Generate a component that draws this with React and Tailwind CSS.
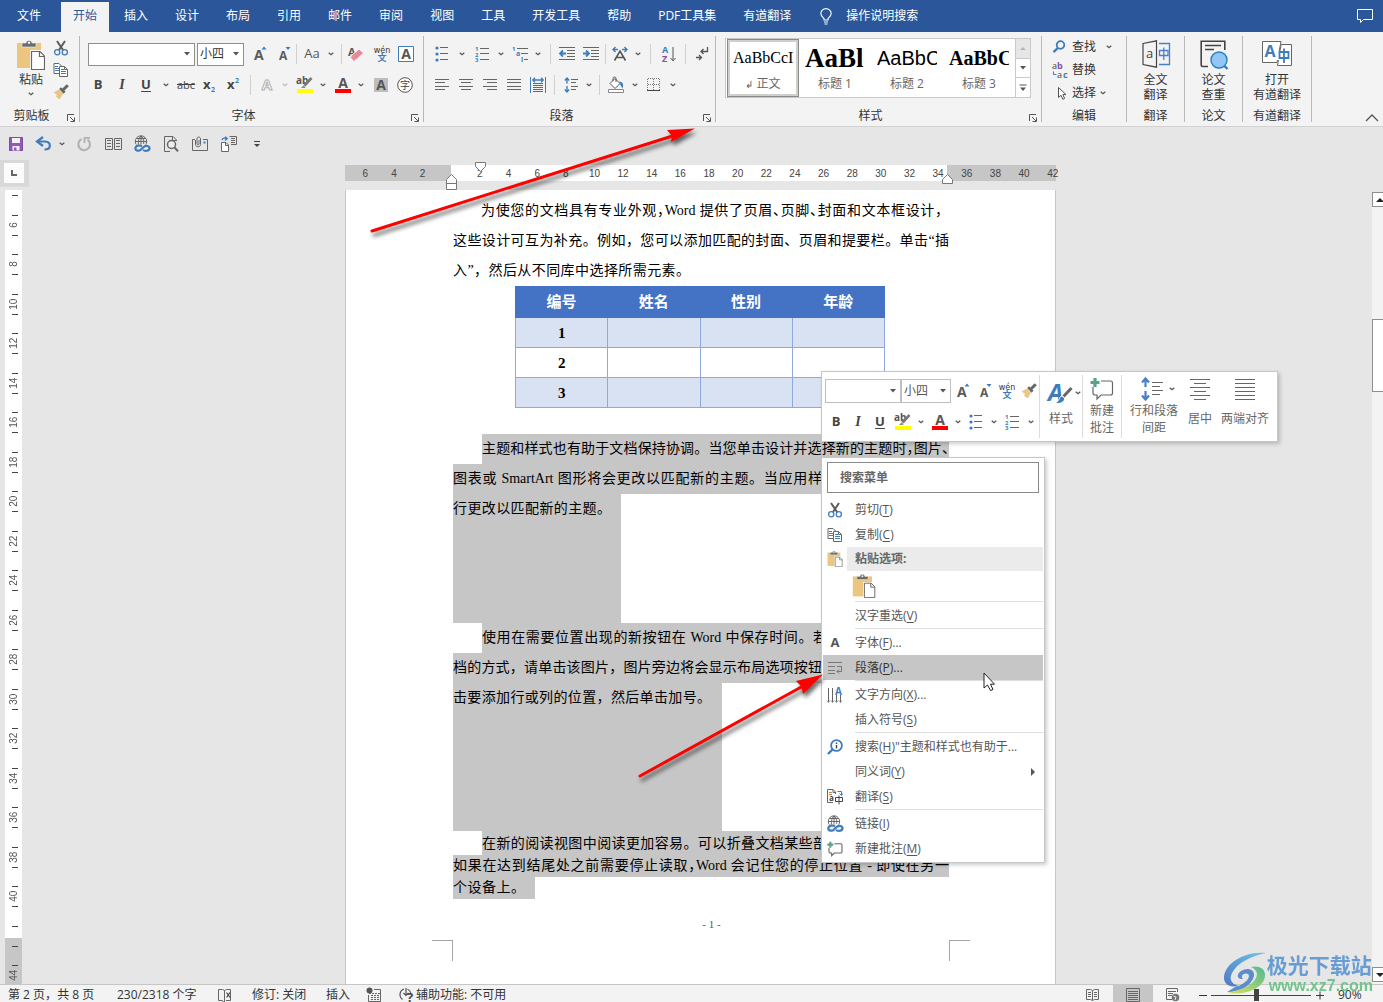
import React from "react";

const GRAY = "#666666";
const BLUE = "#3f7cbb";

/* ---------- small building blocks ---------- */

function Svg({ w = 16, h = 16, children, className = "" }) {
  return (
    <svg width={w} height={h} viewBox={`0 0 ${w} ${h}`} fill="none" aria-hidden="true" className={"shrink-0 overflow-visible " + className}>
      {children}
    </svg>
  );
}

function Btn({ label, className = "w-6", children }) {
  return (
    <button type="button" aria-label={label} title={label} className={"flex h-6 shrink-0 items-center justify-center " + className}>
      {children}
    </button>
  );
}

function Chevron({ color = "#555" }) {
  return (
    <Svg w={6} h={4}>
      <path d="M0.7 0.7 L3 2.8 L5.3 0.7" stroke={color} strokeWidth="1.2" />
    </Svg>
  );
}

function Drop({ label, className = "w-3", color }) {
  return (
    <Btn label={label} className={className}>
      <Chevron color={color} />
    </Btn>
  );
}

function Sep({ className = "" }) {
  return <span className={"h-5 w-px shrink-0 bg-[#d0d0d0] " + className} />;
}

function Combo({ label, value, className = "" }) {
  return (
    <div className={"grid shrink-0 items-center border bg-white " + className}>
      <select aria-label={label} defaultValue={value} className="col-start-1 row-start-1 h-full w-full appearance-none bg-transparent pl-0.5 text-xs leading-4 outline-none">
        <option>{value}</option>
      </select>
      <Svg w={6} h={4} className="pointer-events-none col-start-1 row-start-1 mr-1 justify-self-end">
        <path d="M0 0H6L3 3.4Z" fill="#555" />
      </Svg>
    </div>
  );
}

/* ---------- icons ---------- */

const T = ({ x, y, s, c = "#444", b, f = "Open Sans", i, children, a = "start" }) => (
  <text x={x} y={y} fontSize={s} fill={c} fontWeight={b ? 700 : 400} fontStyle={i ? "italic" : "normal"} textAnchor={a} fontFamily={`"${f}", "Noto Sans CJK SC", sans-serif`}>
    {children}
  </text>
);

const lines = (list, c = GRAY) =>
  list.map(([x1, x2, y], k) => <path key={k} d={`M${x1} ${y + 0.5}H${x2}`} stroke={c} shapeRendering="crispEdges" />);

const ScissorsIcon = () => (
  <Svg>
    <path d="M4 1L10.2 10.2M12 1L5.8 10.2" stroke="#5c5c5c" strokeWidth="2" />
    <circle cx="4.2" cy="12.2" r="2.6" stroke={BLUE} strokeWidth="1.3" />
    <circle cx="11.8" cy="12.2" r="2.6" stroke={BLUE} strokeWidth="1.3" />
  </Svg>
);
const CopyIcon = () => (
  <Svg>
    <path d="M1 1.5H6L8.5 4V11.5H1Z" fill="#fff" stroke={GRAY} />
    {lines([[2, 5, 4], [2, 6, 6], [2, 6, 8]], BLUE)}
    <path d="M6.5 4.5H11.5L14.5 7.5V14.5H6.5Z" fill="#fff" stroke={GRAY} />
    <path d="M11.5 4.5V7.5H14.5" stroke={GRAY} />
    {lines([[8, 11, 7], [8, 13, 9], [8, 13, 11]], BLUE)}
  </Svg>
);
const BrushIcon = () => (
  <Svg>
    <path d="M0.5 8.5L6 5.5L10 10L6.5 15.5L3 12.5L4 11Z" fill="#ecc585" />
    <path d="M6.2 5L8 3.2L12.6 7.8L10.5 9.8Z" fill="#666" />
    <path d="M10.2 5.8L14.8 1.2" stroke="#666" strokeWidth="3" />
  </Svg>
);
const PasteIcon = ({ s = 30 }) => (
  <svg width={s} height={s} viewBox="0 0 30 30" fill="none" aria-hidden="true">
    <path d="M1 3H25V28H1Z" fill="#ecc57f" />
    <path d="M6 7V3H10C10 -0.5 16 -0.5 16 3H20V7Z" fill="#6b6b6b" stroke="#f3f3f3" strokeWidth="0.6" />
    <circle cx="13" cy="2.8" r="1.2" fill="#f3f3f3" />
    <path d="M15.5 11.5H24L28.5 16V29.5H15.5Z" fill="#fff" stroke="#fff" strokeWidth="3" />
    <path d="M15.5 11.5H24L28.5 16V29.5H15.5Z" fill="#fff" stroke={GRAY} strokeWidth="1.2" />
    <path d="M23.5 11.5V16.5H28.5" stroke={GRAY} strokeWidth="1.2" />
  </svg>
);
const GrowIcon = () => (
  <Svg w={16} h={18}>
    <T x={2} y={15} s={14} b c="#5a5a5a">A</T>
    <path d="M9.5 4.5H14.5L12 1.5Z" fill={BLUE} />
  </Svg>
);
const ShrinkIcon = () => (
  <Svg w={16} h={18}>
    <T x={3} y={15} s={12} b c="#5a5a5a">A</T>
    <path d="M9.5 2H14.5L12 5Z" fill={BLUE} />
  </Svg>
);
const EraserIcon = () => (
  <Svg w={16} h={18}>
    <T x={0} y={11} s={11} b c="#5a5a5a">A</T>
    <path d="M3.5 10.5L11 4L15.5 8L8 15Z" fill="#e8899a" stroke="#f3f3f3" />
    <path d="M3.5 11.5L6.8 15.2" stroke="#e8899a" strokeWidth="2.4" />
  </Svg>
);
const WenIcon = () => (
  <Svg w={18} h={18}>
    <T x={9} y={8} s={8} a="middle" f="DejaVu Sans" c="#333">wén</T>
    <T x={9} y={16} s={9} a="middle" b c={BLUE}>文</T>
  </Svg>
);
const BoxAIcon = () => (
  <Svg>
    <path d="M0.5 0.5H15.5V15.5H0.5Z" fill="#fff" stroke={BLUE} />
    <T x={8} y={13} s={14} b a="middle" c="#555">A</T>
  </Svg>
);
const ShadeAIcon = () => (
  <Svg w={14} h={14}>
    <path d="M0 0H14V14H0Z" fill="#bdbdbd" />
    <T x={7} y={12} s={14} b a="middle" c="#555">A</T>
  </Svg>
);
const CircleIcon = () => (
  <Svg>
    <circle cx="8" cy="8" r="7.3" stroke="#555" fill="#fff" />
    <T x={8} y={11.5} s={10} a="middle">字</T>
  </Svg>
);
const HighlightIcon = () => (
  <Svg w={18} h={18}>
    <T x={0} y={8} s={10} b c="#555">ab</T>
    <path d="M15.5 2L8.5 9.5" stroke="#777" strokeWidth="2.6" />
    <path d="M8 9L5 12H9.5Z" fill="#888" />
    <path d="M1 13H17V17H1Z" fill="#ffff00" />
  </Svg>
);
const FontColorIcon = () => (
  <Svg w={16} h={18}>
    <T x={8} y={12} s={14} b a="middle" c="#555">A</T>
    <path d="M0 13H16V17H0Z" fill="#ff0000" />
  </Svg>
);
const BulletsIcon = () => (
  <Svg w={14}>
    {[2, 8, 14].map((y) => <circle key={y} cx="2" cy={y} r="1.6" fill={BLUE} />)}
    {lines([[5, 13, 1], [5, 13, 7], [5, 13, 13]])}
  </Svg>
);
const NumbersIcon = () => (
  <Svg w={15}>
    <T x={0} y={5} s={6} b c={BLUE}>1</T>
    <T x={0} y={10.5} s={6} b c={BLUE}>2</T>
    <T x={0} y={16} s={6} b c={BLUE}>3</T>
    {lines([[5, 14, 2], [5, 14, 7], [5, 14, 13]])}
  </Svg>
);
const MultiIcon = () => (
  <Svg w={17}>
    <T x={0} y={5} s={6} b c={BLUE}>1</T>
    <T x={4} y={10} s={7} b c={BLUE}>a</T>
    <T x={9} y={16} s={7} b c={BLUE}>i</T>
    {lines([[5, 16, 2], [9, 16, 7], [12, 16, 13]])}
  </Svg>
);
const OutdentIcon = () => (
  <Svg>
    {lines([[0, 16, 1], [8, 16, 4], [8, 16, 7], [8, 16, 10], [0, 16, 13]])}
    <path d="M7 7.5H1.5M4 4.5L1 7.5L4 10.5" stroke={BLUE} strokeWidth="1.8" />
  </Svg>
);
const IndentIcon = () => (
  <Svg>
    {lines([[0, 16, 1], [8, 16, 4], [8, 16, 7], [8, 16, 10], [0, 16, 13]])}
    <path d="M0 7.5H5.5M3 4.5L6 7.5L3 10.5" stroke={BLUE} strokeWidth="1.8" />
  </Svg>
);
const AsianIcon = () => (
  <Svg>
    <path d="M2.5 14.5L8 5L13.5 14.5M4.5 11.5H11.5" stroke="#555" strokeWidth="1.6" />
    <path d="M6 3.5H1.5M3.5 1L1 3.5L3.5 6M10 3.5H14.5M12.5 1L15 3.5L12.5 6" stroke={BLUE} strokeWidth="1.4" />
  </Svg>
);
const SortIcon = () => (
  <Svg>
    <T x={1} y={7} s={9} b c={BLUE}>A</T>
    <T x={1} y={16} s={9} b c="#8a4fa8">Z</T>
    <path d="M12 1V15M9.5 12L12 14.8L14.5 12" stroke="#555" />
  </Svg>
);
const MarksIcon = () => (
  <Svg w={14}>
    <path d="M12.500 1V5.500H6M8.500 3L6 5.500L8.500 8M1 11.500H6.500M4 9L6.500 11.500L4 14" stroke="#555" strokeWidth="1.3" />
  </Svg>
);
const AlignIcon = ({ kind }) => (
  <Svg w={15} h={12}>
    {kind === "left" && lines([[0, 14, 0], [0, 10, 3], [0, 14, 7], [0, 10, 10]])}
    {kind === "center" && lines([[0, 14, 0], [2, 12, 3], [0, 14, 7], [2, 12, 10]])}
    {kind === "right" && lines([[0, 14, 0], [4, 14, 3], [0, 14, 7], [4, 14, 10]])}
    {kind === "full" && lines([[0, 14, 0], [0, 14, 3], [0, 14, 7], [0, 14, 10]])}
  </Svg>
);
const DistributeIcon = () => (
  <Svg>
    <path d="M0.5 0V16M15.5 0V16" stroke={BLUE} />
    <path d="M3 3H13M5 0.8L2.8 3L5 5.2M11 0.8L13.2 3L11 5.2" stroke={BLUE} strokeWidth="1.4" />
    {lines([[3, 13, 6], [3, 13, 8], [3, 13, 10], [3, 13, 12], [3, 13, 14]])}
  </Svg>
);
const SpacingIcon = () => (
  <Svg w={15}>
    <path d="M3 1V6.5M0.8 3.5L3 1L5.2 3.5M3 9V15M0.8 12.5L3 15L5.2 12.5" stroke={BLUE} strokeWidth="1.4" />
    {lines([[7, 14, 2], [7, 12, 5], [7, 14, 9], [7, 12, 12]])}
  </Svg>
);
const BucketIcon = () => (
  <Svg w={18} h={18}>
    <path d="M3 7.5L8 2.5L13 7.5L8 12.5Z" fill="#fff" stroke="#555" />
    <path d="M6 5V2.5C6 0.5 9 0.5 9 2.5V6" stroke="#555" />
    <path d="M12.5 5.5C16 6 17 8.5 15.5 12.5C14 11 14.5 9.5 12.5 7.5Z" fill={BLUE} />
    <path d="M1.5 13.5H16.5V16.5H1.5Z" fill="#fff" stroke="#888" />
  </Svg>
);
const BorderIcon = () => (
  <Svg w={14} h={14}>
    <path d="M0.5 0.5H12.5V12.5M0.5 0.5V12.5M6.5 0.5V12.5M0.5 6.5H12.5" stroke="#777" strokeDasharray="1 1" shapeRendering="crispEdges" />
    <path d="M0 12.5H13" stroke="#444" />
  </Svg>
);
const SearchIcon = () => (
  <Svg w={14} h={14}>
    <circle cx="8.5" cy="5" r="3.8" stroke={BLUE} strokeWidth="1.8" />
    <path d="M5.8 8L1.5 12.2" stroke={BLUE} strokeWidth="2.4" />
  </Svg>
);
const ReplaceIcon = () => (
  <Svg w={17} h={17}>
    <T x={0} y={7} s={9} c="#444">a</T>
    <T x={5} y={7} s={9} b c="#8a4fa8">b</T>
    <path d="M1.5 9.5V12.5H4.5" stroke={BLUE} />
    <T x={5} y={16} s={9} c="#444">a</T>
    <T x={11} y={16} s={9} b c={BLUE}>c</T>
  </Svg>
);
const PointerIcon = () => (
  <Svg w={10} h={15}>
    <path d="M1.5 1.5V11.5L4 9.3L5.8 13.3L7.6 12.5L5.9 8.6H9Z" fill="#fff" stroke="#555" />
  </Svg>
);
const PageTranslateIcon = () => (
  <Svg w={28} h={28}>
    <path d="M1 3.5L14.5 0.8V27.2L1 24.5Z" stroke="#444" strokeWidth="1.2" />
    <T x={7.5} y={18} s={13} a="middle">a</T>
    <path d="M17 3.5H27.5V24.5H17" stroke="#4a7fd0" strokeWidth="1.3" />
    <path d="M17.5 10.5H26V15.5H17.5ZM21.8 7.5V20" stroke="#4a7fd0" strokeWidth="1.3" />
  </Svg>
);
const CheckPaperIcon = () => (
  <Svg w={28} h={30}>
    <path d="M8 26.5H3C1.8 26.5 1.2 25.8 1.2 24.8V1.2H24.8V10" stroke="#444" strokeWidth="1.6" />
    <path d="M5 5.5H21M5 9.5H14" stroke="#444" strokeWidth="1.6" />
    <circle cx="19" cy="20" r="8" fill="#90c6f8" stroke="#2b7fb5" strokeWidth="1.4" />
    <path d="M24.5 26L27.5 29" stroke="#2b7fb5" strokeWidth="2.4" />
  </Svg>
);
const YoudaoIcon = () => (
  <Svg w={30} h={28}>
    <path d="M20 4.5H29.5V25.5H15.5L19 5Z" fill="#fff" stroke={GRAY} />
    <path d="M0.5 1.5H19L15 22.5H0.5Z" fill="#fff" stroke={GRAY} />
    <T x={8} y={17} s={16} b a="middle" c={BLUE}>A</T>
    <path d="M16 11H28V20H14.500Z" fill="#fff" />
    <path d="M17.500 12H26.500V18H17.500ZM22 8.500V23" stroke={BLUE} strokeWidth="1.800" />
  </Svg>
);
const LinkIcon = () => (
  <Svg w={18} h={18}>
    <circle cx="8" cy="6.5" r="5.7" stroke={GRAY} />
    <path d="M2.3 6.5H13.7M3.3 3.5H12.7M8 1V10M8 1C5 3.5 5 9 6 11M8 1C11 3.5 11 7 10.5 9" stroke={GRAY} />
    <path d="M1 9.5H17V17H1Z" fill="#eee" fillOpacity="0.9" />
    <path d="M9 11.5C7 9.8 3 10.3 2.3 13C2.3 15.8 6 16.6 8 14.5L10.8 12C13 10 16.5 11 16.5 13.5C16.2 16 12 16.6 10 15" stroke={BLUE} strokeWidth="2.2" />
  </Svg>
);
const NewCommentIcon = ({ big }) => (
  <svg width={big ? 24 : 16} height={big ? 24 : 16} viewBox="0 0 24 24" fill="none" aria-hidden="true">
    <path d="M11 4H20.5C22 4 22.5 4.8 22.5 6V16C22.5 17.2 21.8 18 20.5 18H11L7 22V18H5C3.5 18 3 17 3 16V10" stroke={GRAY} strokeWidth={big ? 1.2 : 1.6} />
    <path d="M5 1V10M0.5 5.5H9.5" stroke="#5e9e8c" strokeWidth="3.2" />
  </svg>
);

/* ---------- header ---------- */

const TABS = ["插入", "设计", "布局", "引用", "邮件", "审阅", "视图", "工具", "开发工具", "帮助", "PDF工具集", "有道翻译"];

function Header() {
  return (
    <header className="flex h-8 shrink-0 items-stretch bg-[#2b579a] pl-[5px] pr-2.5 text-xs text-white">
      <button type="button" className="mr-2 px-3">文件</button>
      <nav className="flex gap-[3px]">
        <button type="button" aria-current="page" className="mt-0.5 bg-[#f3f3f3] px-3 pb-0.5 text-[#2b579a]">开始</button>
        {TABS.map((t) => (
          <button type="button" key={t} className="whitespace-nowrap px-3">{t}</button>
        ))}
      </nav>
      <button type="button" className="ml-[17px] flex items-center gap-3.5">
        <Svg w={12} h={17}>
          <path d="M4 12V10.5C2.5 9 0.8 7.8 0.8 5.5A5.2 4.9 0 0 1 11.2 5.5C11.2 7.8 9.5 9 8 10.5V12ZM4 14H8M4.5 16H7.5" stroke="#fff" strokeWidth="1.1" />
        </Svg>
        操作说明搜索
      </button>
      <button type="button" aria-label="批注" className="ml-auto">
        <Svg>
          <path d="M0.5 1.5H15.5V11.5H6.5L3.5 14.5V11.5H0.5Z" stroke="#fff" />
        </Svg>
      </button>
    </header>
  );
}

/* ---------- ribbon ---------- */

function Group({ name, launcher, className, children }) {
  return (
    <section aria-label={name} className={"flex shrink-0 border-r border-transparent " + className}>
      <div className="flex min-w-0 flex-1 flex-col">
        <div className="h-[74px]">{children}</div>
        <div className="flex h-5 items-center text-xs">
          <span className="flex-1 text-center">{name}</span>
          {launcher && (
            <button type="button" aria-label={name + "设置"} className="flex w-4 justify-center pt-1">
              <Svg w={8} h={8}>
                <path d="M0.5 7V0.5H7M3 3L7 7M7.5 3.5V7.5H3.5" stroke="#555" />
              </Svg>
            </button>
          )}
        </div>
      </div>
      <span className="-mr-px mt-1 h-[86px] w-px bg-[#b8b8b8]" />
    </section>
  );
}

function StyleSample({ sample, sampleClass, name, selected }) {
  return (
    <button
      type="button"
      className={"flex w-[72px] shrink-0 flex-col items-center overflow-hidden bg-white " + (selected ? "border border-[#8a8a86] ring-2 ring-inset ring-[#cfcfcb]" : "border border-transparent")}
    >
      <span className={"flex h-9 w-[60px] items-center overflow-hidden whitespace-nowrap text-black " + sampleClass}>{sample}</span>
      <span className="text-xs leading-4 text-[#666]">{name}</span>
    </button>
  );
}

function BigButton({ icon, a, b }) {
  return (
    <button type="button" className="flex w-full flex-col items-center pt-2 text-xs leading-[15px]">
      <span className="flex h-8 items-start">{icon}</span>
      <span>{a}</span>
      <span>{b}</span>
    </button>
  );
}

function Ribbon() {
  return (
    <div className="flex h-[95px] shrink-0 border-b border-[#d2d2d2] bg-[#f3f3f3] text-[#333]">
      <Group name="剪贴板" launcher className="w-20">
        <div className="flex pl-4 pt-2">
          <button type="button" className="flex w-[30px] flex-col items-center text-xs leading-4">
            <PasteIcon />
            <span className="mb-1 mt-0.5">粘贴</span>
            <Chevron />
          </button>
          <div className="ml-[3px] flex flex-col">
            <button type="button" aria-label="剪切" className="flex h-[22px] w-6 justify-center"><ScissorsIcon /></button>
            <button type="button" aria-label="复制" className="flex h-[22px] w-6 justify-center"><CopyIcon /></button>
            <button type="button" aria-label="格式刷" className="flex h-[22px] w-6 justify-center"><BrushIcon /></button>
          </div>
        </div>
      </Group>

      <Group name="字体" launcher className="w-[344px]">
        <div className="flex flex-col gap-[7px] pt-2.5">
          <div className="flex items-center pl-2">
            <Combo label="字体名称" value="" className="h-[23px] w-[107px] border-[#8f8f8f]" />
            <Combo label="字号" value="小四" className="ml-0.5 mr-1 h-[23px] w-[47px] border-[#8f8f8f]" />
            <Btn label="增大字号"><GrowIcon /></Btn>
            <Btn label="减小字号"><ShrinkIcon /></Btn>
            <Sep />
            <Btn label="更改大小写" className="w-11 gap-2 text-[13px] text-[#555]">Aa <Chevron /></Btn>
            <Sep />
            <Btn label="清除格式" className="w-7"><EraserIcon /></Btn>
            <Btn label="拼音指南"><WenIcon /></Btn>
            <Btn label="字符边框"><BoxAIcon /></Btn>
          </div>
          <div className="flex items-center pl-1.5 text-[13px] text-[#444]">
            <Btn label="加粗"><b>B</b></Btn>
            <Btn label="倾斜"><i className="font-[Liberation_Serif] text-sm font-bold">I</i></Btn>
            <Btn label="下划线"><b className="underline underline-offset-2">U</b></Btn>
            <Drop label="下划线样式" className="w-4" />
            <Btn label="删除线"><s className="text-[11px]">abc</s></Btn>
            <Btn label="下标">
              <Svg><T x={1} y={12} s={13} b>x</T><T x={9} y={15} s={7} b c={BLUE}>2</T></Svg>
            </Btn>
            <Btn label="上标">
              <Svg><T x={1} y={12} s={13} b>x</T><T x={9} y={6} s={7} b c={BLUE}>2</T></Svg>
            </Btn>
            <Sep className="mx-1" />
            <Btn label="文本效果">
              <Svg>
                <text x="8" y="13" fontSize="15" fontWeight="700" textAnchor="middle" fill="#fff" stroke="#b0b0b0" strokeWidth="1" fontFamily="Open Sans">A</text>
              </Svg>
            </Btn>
            <Drop label="文本效果选项" className="mr-0.5 w-3" color="#bbb" />
            <Btn label="突出显示"><HighlightIcon /></Btn>
            <Drop label="突出显示颜色" className="mr-0.5 w-3" />
            <Btn label="字体颜色"><FontColorIcon /></Btn>
            <Drop label="字体颜色选项" className="mr-0.5 w-3" />
            <Btn label="字符底纹"><ShadeAIcon /></Btn>
            <Btn label="带圈字符"><CircleIcon /></Btn>
          </div>
        </div>
      </Group>

      <Group name="段落" launcher className="w-[292px]">
        <div className="flex flex-col gap-[7px] pt-2.5">
          <div className="flex items-center pl-1.5">
            <Btn label="项目符号"><BulletsIcon /></Btn>
            <Drop label="项目符号库" className="w-4" />
            <Btn label="编号"><NumbersIcon /></Btn>
            <Drop label="编号库" className="w-3.5" />
            <Btn label="多级列表"><MultiIcon /></Btn>
            <Drop label="列表库" />
            <Sep className="ml-1.5 mr-1" />
            <Btn label="减少缩进"><OutdentIcon /></Btn>
            <Btn label="增加缩进"><IndentIcon /></Btn>
            <Sep className="mx-0.5" />
            <Btn label="中文版式"><AsianIcon /></Btn>
            <Drop label="中文版式选项" />
            <Sep className="mx-1.5" />
            <Btn label="排序"><SortIcon /></Btn>
            <Sep className="mx-1" />
            <Btn label="显示编辑标记"><MarksIcon /></Btn>
          </div>
          <div className="flex items-center pl-1.5">
            <Btn label="左对齐"><AlignIcon kind="left" /></Btn>
            <Btn label="居中"><AlignIcon kind="center" /></Btn>
            <Btn label="右对齐"><AlignIcon kind="right" /></Btn>
            <Btn label="两端对齐"><AlignIcon kind="full" /></Btn>
            <Btn label="分散对齐"><DistributeIcon /></Btn>
            <Sep className="mx-1" />
            <Btn label="行距"><SpacingIcon /></Btn>
            <Drop label="行距选项" />
            <Sep className="mx-1" />
            <Btn label="底纹"><BucketIcon /></Btn>
            <Drop label="底纹选项" className="w-3.5" />
            <Btn label="边框"><BorderIcon /></Btn>
            <Drop label="边框选项" className="w-3.5" />
          </div>
        </div>
      </Group>

      <Group name="样式" launcher className="w-[326px]">
        <div className="ml-[9px] flex pt-1.5">
          <div className="flex h-[60px] w-[306px] border border-[#c9c9c9] bg-white">
            <div className="flex flex-1 overflow-hidden pl-px">
              <StyleSample selected sample="AaBbCcI" sampleClass="font-[Liberation_Serif] text-base" name={<><span className="text-[10px]">↲</span> 正文</>} />
              <StyleSample sample="AaBl" sampleClass="font-[Liberation_Serif] text-[27px] font-bold" name="标题 1" />
              <StyleSample sample="AaBbC" sampleClass="font-[Liberation_Sans] text-xl" name="标题 2" />
              <StyleSample sample="AaBbC" sampleClass="font-[Liberation_Serif] text-xl font-bold" name="标题 3" />
            </div>
            <div className="flex w-[15px] flex-col divide-y divide-[#c9c9c9] border-l border-[#c9c9c9]">
              <button type="button" aria-label="上一行" className="grid flex-1 place-items-center bg-[#e6e6e6]"><Svg w={6} h={4}><path d="M0 4H6L3 1Z" fill="#b5b5b5" /></Svg></button>
              <button type="button" aria-label="下一行" className="grid flex-1 place-items-center"><Svg w={6} h={4}><path d="M0 0H6L3 3.4Z" fill="#555" /></Svg></button>
              <button type="button" aria-label="更多样式" className="grid flex-1 place-items-center"><Svg w={8} h={8}><path d="M1 3.5H7L4 7Z" fill="#555" /><path d="M0.5 1H7.5" stroke="#555" /></Svg></button>
            </div>
          </div>
        </div>
      </Group>

      <Group name="编辑" className="w-[85px]">
        <div className="flex flex-col items-start gap-[7px] pl-2.5 pt-[7px] text-xs leading-4">
          <button type="button" className="flex items-center"><span className="w-5"><SearchIcon /></span>查找<span className="ml-2.5"><Chevron /></span></button>
          <button type="button" className="flex h-4 items-center"><span className="w-5"><ReplaceIcon /></span>替换</button>
          <button type="button" className="flex h-4 items-center"><span className="flex w-5 justify-center"><PointerIcon /></span>选择<span className="ml-1"><Chevron /></span></button>
        </div>
      </Group>
      <Group name="翻译" className="w-[58px]"><BigButton icon={<PageTranslateIcon />} a="全文" b="翻译" /></Group>
      <Group name="论文" className="w-[58px]"><BigButton icon={<CheckPaperIcon />} a="论文" b="查重" /></Group>
      <Group name="有道翻译" className="w-[69px]"><BigButton icon={<YoudaoIcon />} a="打开" b="有道翻译" /></Group>

      <button type="button" aria-label="折叠功能区" className="mb-1 ml-auto mr-1 self-end">
        <Svg w={14} h={8}><path d="M1 7L7 1L13 7" stroke="#555" strokeWidth="1.3" /></Svg>
      </button>
    </div>
  );
}

/* ---------- quick access bar ---------- */

function QuickAccess() {
  return (
    <div className="flex h-[33px] shrink-0 items-center pl-1">
      <Btn label="保存">
        <Svg><path d="M1.5 1.5H14.5V14.5H1.5Z" fill="#8e5cb5" stroke="#7f4aa8" /><path d="M4 2H12V7H4Z M4.5 10H11.5V14.5H4.5Z" fill="#f5f0fa" /><path d="M6 11.5H8.5V14.5H6Z" fill="#8e5cb5" /></Svg>
      </Btn>
      <Btn label="撤消" className="ml-1 w-6">
        <Svg><path d="M2.5 5.5H9C15.5 6 15.5 13.5 8.5 13.5" stroke={BLUE} strokeWidth="2.2" /><path d="M7 1L1 5.5L7 10" fill="none" stroke={BLUE} strokeWidth="2.2" /></Svg>
      </Btn>
      <Drop label="撤消列表" />
      <Btn label="重复" className="ml-1 w-6">
        <Svg><path d="M5.5 3.2A5.8 5.8 0 1 0 11.500 3.600" stroke="#b0b0b0" strokeWidth="2" /><path d="M8.500 7V1.800H14" stroke="#b0b0b0" strokeWidth="1.8" /></Svg>
      </Btn>
      <Btn label="并排查看" className="ml-1 w-[27px]">
        <Svg w={17}>{lines([[2, 6, 4], [2, 6, 7], [2, 6, 10], [11, 15, 4], [11, 15, 7], [11, 15, 10]])}<path d="M0.5 2.5H7.5V13.5H0.5ZM9.5 2.5H16.5V13.5H9.5Z" stroke={GRAY} /></Svg>
      </Btn>
      <Btn label="超链接" className="w-[30px]"><LinkIcon /></Btn>
      <Btn label="打印预览" className="w-7">
        <Svg><path d="M7 15.5H1.5V0.5H10L13.5 4V5M9.5 0.5V4.5H13.5" stroke={GRAY} /><circle cx="8.5" cy="8.5" r="4" fill="#eee" stroke={GRAY} strokeWidth="1.5" /><path d="M11.5 11.5L15 15.2" stroke={GRAY} strokeWidth="2" /></Svg>
      </Btn>
      <Btn label="附件邮件" className="w-[29px]">
        <Svg w={18}><path d="M4 3.5H1.5V14.5H16.5V3.5H12" stroke={GRAY} /><path d="M12.5 5.5H14.5V7.5H12.5Z" fill={BLUE} /><path d="M4.5 4V8.5C4.5 11.5 9.5 11.5 9.5 8.5V2.8C9.5 0.5 6 0.5 6 2.8V8C6 9 8 9 8 8V4" stroke={GRAY} /></Svg>
      </Btn>
      <Btn label="插入对象" className="w-[29px]">
        <Svg w={17}><path d="M9.5 0.5H16.5V8.5H11M11 2.5H15M11 4.5H15M11 6.5H15" stroke={GRAY} /><path d="M1.5 6.5H6L8.5 9V15.5H1.5ZM5.5 6.5V9.5H8.5" fill="#fff" stroke={GRAY} /><path d="M2 4C2.5 2 4 1.8 7 2.5M5 0.8L7.2 2.5L5 4.5" stroke={BLUE} strokeWidth="1.3" /></Svg>
      </Btn>
      <Btn label="自定义快速访问工具栏" className="w-7">
        <Svg w={8} h={8}><path d="M1 1.5H7" stroke="#444" /><path d="M1 4H7L4 7Z" fill="#444" /></Svg>
      </Btn>
    </div>
  );
}

/* ---------- rulers and scroll bar ---------- */

const V_UNITS = Array.from({ length: 40 }, (_, k) => k + 5);
const H_UNITS = Array.from({ length: 25 }, (_, k) => Math.abs(k * 2 - 6));

function LeftColumn() {
  return (
    <div className="flex w-[29px] shrink-0 flex-col overflow-hidden">
      <div className="mb-[3px] flex h-[27px] shrink-0 items-center border-b border-[#dcdcdc] bg-[#d8d8d8] pl-1">
        <button type="button" aria-label="制表符" className="grid h-5 w-5 place-items-center bg-[#fbfbfb]">
          <Svg w={6} h={6}><path d="M1 0V5H6" stroke="#666" strokeWidth="2" /></Svg>
        </button>
      </div>
      <div className="ml-[5px] flex w-[17px] flex-1 flex-col bg-[linear-gradient(to_top,#c6c6c6_46px,#ffffff_46px)] pt-1 font-[Liberation_Sans] text-[10px] leading-none text-[#555]">
        {V_UNITS.map((n) => (
          <div key={n} className="flex min-h-0 flex-1 flex-col items-center">
            <span className="ml-0.5 mt-px h-px w-1.5 shrink-0 bg-[#444]" />
            <span className="flex min-h-0 flex-1 rotate-180 items-center justify-center [writing-mode:vertical-rl]">
              {n % 2 === 0 && n !== 42 ? n : ""}
            </span>
          </div>
        ))}
      </div>
    </div>
  );
}

function HorizontalRuler() {
  return (
    <div className="relative h-[30px] shrink-0 pt-[5px]">
      <div className="flex h-4 items-center bg-[linear-gradient(to_right,#c6c6c6_106px,#ffffff_106px,#ffffff_602px,#c6c6c6_602px)] pl-1.5 font-[Liberation_Sans] text-[10px] text-[#444]">
        <div className="-mr-[11px] flex flex-1">
          {H_UNITS.map((n, k) => (
            <span key={k} className="flex-1 basis-0 text-center">{n || ""}</span>
          ))}
        </div>
      </div>
      <svg viewBox="345 160 711 30" className="absolute inset-0 h-[30px] w-full" fill="#fff" stroke="#777" aria-hidden="true">
        <path d="M475.5 162.500H485.500V166.500L480.500 171.500L475.500 166.500Z" />
        <path d="M446.500 189.500V179.500L451.500 174.500L456.500 179.500V189.500ZM446.500 183.500H456.500" />
        <path d="M942.500 183.500V179.500L947.500 174.500L952.500 179.500V183.500Z" />
      </svg>
    </div>
  );
}

function ScrollBar() {
  const box = "grid w-[15px] shrink-0 place-items-center border border-[#8f8f8f] bg-white";
  return (
    <div className="flex w-[11px] shrink-0 flex-col overflow-hidden pt-8">
      <div className="flex flex-1 flex-col bg-[#f3f3f3]">
        <button type="button" aria-label="向上滚动" className={box + " h-[15px]"}>
          <Svg w={8} h={4}><path d="M0 4H8L4 0Z" fill="#222" /></Svg>
        </button>
        <div className="grow-[112] basis-0" />
        <div className={box + " h-[73px]"} />
        <div className="grow-[575] basis-0" />
        <button type="button" aria-label="向下滚动" className={box + " mb-0.5 h-[15px]"}>
          <Svg w={8} h={4}><path d="M0 0H8L4 4Z" fill="#222" /></Svg>
        </button>
      </div>
    </div>
  );
}

/* ---------- document ---------- */

/* full-width comma */
const C = "\uff0c";

/* half-width punctuation */
const H = ({ children }) => <span className="[font-feature-settings:'halt']">{children}</span>;

function Line({ box = "", text = "w-full", children }) {
  return (
    <span className={"block " + box}>
      <span className={"block whitespace-nowrap [text-align-last:justify] " + text}>{children}</span>
    </span>
  );
}

function DocTable() {
  return (
    <table className="ml-[62px] w-[370px] table-fixed border-collapse text-[15px] font-bold">
      <thead>
        <tr className="h-[31px] text-white">
          {["编号", "姓名", "性别", "年龄"].map((h) => (
            <th key={h} className="border border-[#4472c4] bg-[#4472c4] p-0 leading-5">{h}</th>
          ))}
        </tr>
      </thead>
      <tbody>
        {[1, 2, 3].map((n) => (
          <tr key={n} className={"h-[30px] " + (n % 2 ? "bg-[#d9e2f3]" : "bg-white")}>
            <th className="border border-[#8eaadb] p-0 leading-5">{n}</th>
            <td className="border border-[#8eaadb]" />
            <td className="border border-[#8eaadb]" />
            <td className="border border-[#8eaadb]" />
          </tr>
        ))}
      </tbody>
    </table>
  );
}

function Page() {
  return (
    <article lang="zh-CN" className="min-h-0 flex-1 overflow-hidden border-x border-[#c6c6c6] bg-white pl-[107px] pr-[106px] pt-1.5 font-[Liberation_Serif,Noto_Sans_CJK_SC,serif] text-sm leading-[30px] text-black">
      <p>
        <Line box="ml-7">为使您的文档具有专业外观<H>{C}</H>Word 提供了页眉<H>、</H>页脚<H>、</H>封面和文本框设计{C}</Line>
        <Line>这些设计可互为补充。例如{C}您可以添加匹配的封面、页眉和提要栏。单击“插</Line>
        <Line text="w-[237px]">入”{C}然后从不同库中选择所需元素。</Line>
      </p>
      <DocTable />
      <p className="mt-[26px]">
        <Line box="ml-[29px] bg-[#c6c6c6]">主题和样式也有助于文档保持协调。当您单击设计并选择新的主题时<H>{C}</H>图片<H>、</H></Line>
        <Line box="bg-[#c6c6c6]" text="w-[369px]">图表或 SmartArt 图形将会更改以匹配新的主题。当应用样</Line>
        <Line box="h-[129px] w-[168px] bg-[#c6c6c6]" text="w-[158px]">行更改以匹配新的主题。</Line>
      </p>
      <p>
        <Line box="ml-[29px] bg-[#c6c6c6]" text="w-[345px]">使用在需要位置出现的新按钮在 Word 中保存时间。若</Line>
        <Line box="bg-[#c6c6c6]" text="w-[369px]">档的方式{C}请单击该图片{C}图片旁边将会显示布局选项按钮</Line>
        <Line box="h-[148px] w-[269px] bg-[#c6c6c6]" text="w-[258px]">击要添加行或列的位置{C}然后单击加号。</Line>
      </p>
      <p className="leading-[22px]">
        <Line box="ml-[29px] bg-[#c6c6c6] pt-0.5" text="w-[345px]">在新的阅读视图中阅读更加容易。可以折叠文档某些部</Line>
        <Line box="bg-[#c6c6c6]">如果在达到结尾处之前需要停止读取<H>{C}</H>Word 会记住您的停止位置 - 即使在另一</Line>
        <Line box="w-[82px] bg-[#c6c6c6]" text="w-[72px]">个设备上。</Line>
      </p>
      <p className="ml-[21px] mt-[13px] text-center text-[11px] leading-6 text-[#555]">- 1 -</p>
      <div className="-mx-[21px] mt-1 flex justify-between">
        <span className="h-[21px] w-[21px] border-r border-t border-[#a6a6a6]" />
        <span className="h-[21px] w-[21px] border-l border-t border-[#a6a6a6]" />
      </div>
    </article>
  );
}

/* ---------- floating panels ---------- */

function MiniToolbar() {
  const big = "flex shrink-0 flex-col items-center text-xs leading-[17px] text-[#666]";
  return (
    <div role="toolbar" aria-label="浮动工具栏" className="absolute left-[476px] top-[211px] flex h-[71px] w-[457px] border border-[#c6c6c6] bg-white pl-[3px] shadow-[2px_2px_4px_rgba(0,0,0,0.2)]">
      <div className="w-[214px] shrink-0 pt-[7px] text-[13px] text-[#444]">
        <div className="flex items-center">
          <Combo label="浮动工具栏字体" value="" className="h-6 w-[76px] border-[#c0c0c0]" />
          <Combo label="浮动工具栏字号" value="小四" className="mr-px h-6 w-[50px] border-[#c0c0c0] text-[#555]" />
          <Btn label="增大字号" className="w-[22px]"><GrowIcon /></Btn>
          <Btn label="减小字号" className="w-[22px]"><ShrinkIcon /></Btn>
          <Btn label="拼音指南" className="w-[22px]"><WenIcon /></Btn>
          <Btn label="格式刷" className="w-[22px]"><BrushIcon /></Btn>
        </div>
        <div className="mt-[7px] flex items-center">
          <Btn label="加粗" className="w-[22px]"><b>B</b></Btn>
          <Btn label="倾斜" className="w-[22px]"><i className="font-[Liberation_Serif] text-sm font-bold">I</i></Btn>
          <Btn label="下划线" className="w-[22px]"><b className="underline underline-offset-2">U</b></Btn>
          <Btn label="突出显示"><HighlightIcon /></Btn>
          <Drop label="突出显示颜色" />
          <Btn label="字体颜色" className="w-[26px]"><FontColorIcon /></Btn>
          <Drop label="字体颜色选项" className="w-2.5" />
          <Btn label="项目符号" className="w-[26px]"><BulletsIcon /></Btn>
          <Drop label="项目符号库" className="w-2.5" />
          <Btn label="编号" className="w-[27px]"><NumbersIcon /></Btn>
          <Drop label="编号库" className="w-2.5" />
        </div>
      </div>
      <span className="my-[3px] w-px bg-[#dcdcdc]" />
      <button type="button" className={big + " w-[42px] pt-1"}>
        <span className="flex h-[34px] items-center gap-0.5 pl-1.5">
          <Svg w={25} h={24}>
            <T x={0} y={20} s={24} b i c={BLUE}>A</T>
            <path d="M23 7L15 16" stroke="#fff" strokeWidth="5" />
            <path d="M23.500 7L15.500 15.500" stroke="#666" strokeWidth="3" />
            <path d="M14 15C11 15 12 20 7 22C12 23.500 17 21 16.500 17Z" fill={BLUE} stroke="#fff" />
          </Svg>
          <Chevron />
        </span>
        样式
      </button>
      <span className="my-[3px] w-px bg-[#dcdcdc]" />
      <button type="button" className={big + " w-[38px] pt-1"}>
        <span className="flex h-[26px] items-center"><NewCommentIcon big /></span>
        <span>新建</span>
        <span>批注</span>
      </button>
      <span className="my-[3px] w-px bg-[#dcdcdc]" />
      <button type="button" className={big + " w-[64px] pt-1"}>
        <span className="flex h-[26px] items-center gap-1 pl-2">
          <Svg w={24} h={24}>
            <path d="M4.500 2V10M1 5.500L4.500 1.500L8 5.500M4.500 14V22M1 18.500L4.500 22.500L8 18.500" stroke="#4a80c8" strokeWidth="2.2" />
            {lines([[11, 22, 5], [11, 19, 9], [11, 22, 13], [11, 19, 17]])}
          </Svg>
          <Chevron />
        </span>
        <span>行和段落</span>
        <span>间距</span>
      </button>
      <button type="button" className={big + " w-7 pt-1"}>
        <span className="flex h-[34px] items-start pt-[3px]">
          <Svg w={21} h={23}>{lines([[0, 20, 0], [4, 16, 4], [0, 20, 8], [4, 16, 12], [0, 20, 16], [4, 16, 20]])}</Svg>
        </span>
        居中
      </button>
      <button type="button" className={big + " w-[62px] pt-1"}>
        <span className="flex h-[34px] items-start pt-[3px]">
          <Svg w={21} h={23}>{lines([[0, 20, 0], [0, 20, 4], [0, 20, 8], [0, 20, 12], [0, 20, 16], [0, 20, 20]])}</Svg>
        </span>
        两端对齐
      </button>
    </div>
  );
}

function Item({ icon, text, k, tail = "", active, arrow }) {
  return (
    <button type="button" role="menuitem" className={"flex h-[25px] w-full items-center text-left text-xs " + (active ? "bg-[#c6c6c6] text-[#333]" : "text-[#555]")}>
      <span className="flex w-6 shrink-0 justify-center">{icon}</span>
      <span className="ml-2 whitespace-nowrap">{text}(<u className="underline-offset-2">{k}</u>){tail}</span>
      {arrow && <Svg w={4} h={8} className="ml-auto mr-2"><path d="M0 0V8L4 4Z" fill="#555" /></Svg>}
    </button>
  );
}

const Rule = () => <div role="separator" className="mb-px ml-8 h-px bg-[#dedede]" />;

function ContextMenu() {
  return (
    <div role="menu" aria-label="右键菜单" className="absolute left-[476px] top-[297px] w-[224px] border border-[#c6c6c6] bg-white px-px pb-px pt-1 shadow-[2px_2px_4px_rgba(0,0,0,0.2)]">
      <input aria-label="搜索菜单" placeholder="搜索菜单" className="mx-1 mb-1 block h-[31px] w-[212px] border border-[#8a8a8a] bg-white pl-3 text-xs font-bold outline-none placeholder:text-[#666]" />
      <Item icon={<ScissorsIcon />} text="剪切" k="T" />
      <Item icon={<CopyIcon />} text="复制" k="C" />
      <div className="flex h-6 items-center text-xs font-bold text-[#666]">
        <span className="flex w-6 justify-center"><PasteIcon s={16} /></span>
        <span className="flex h-full flex-1 items-center bg-[#ebebeb] pl-2">粘贴选项:</span>
      </div>
      <button type="button" role="menuitem" aria-label="保留源格式粘贴" className="flex h-[30px] items-center pl-[29px]">
        <PasteIcon s={24} />
      </button>
      <Rule />
      <Item text="汉字重选" k="V" />
      <Rule />
      <Item icon={<b className="text-[13px] text-[#555]">A</b>} text="字体" k="F" tail="..." />
      <Item
        active
        icon={<Svg>{lines([[1, 15, 2], [1, 8, 6], [1, 8, 10], [1, 8, 13]], "#777")}<path d="M14.500 6V11.500H10M12 9.500L10 11.500L12 13.500M10 6.500H14" stroke="#777" /></Svg>}
        text="段落"
        k="P"
        tail="..."
      />
      <Rule />
      <Item
        icon={<Svg w={17}><path d="M1.500 1V15M5.500 1V15M9.500 8V15M13.500 8V15" stroke={GRAY} /><path d="M0 13.500L1.500 15.500L3 13.500M4 13.500L5.500 15.500L7 13.500M8 13.500L9.500 15.500L11 13.500M12 13.500L13.500 15.500L15 13.500" stroke={GRAY} strokeWidth="0.7" /><T x={8} y={7.5} s={10} b c={BLUE}>A</T></Svg>}
        text="文字方向"
        k="X"
        tail="..."
      />
      <Item text="插入符号" k="S" />
      <Rule />
      <Item
        icon={<Svg><circle cx="9.500" cy="6.500" r="5.400" stroke={BLUE} strokeWidth="1.800" /><path d="M5.500 10.500L1 15" stroke={BLUE} strokeWidth="2.400" /><path d="M9.500 6V9.500M9.500 3.500V5" stroke="#444" strokeWidth="1.400" /></Svg>}
        text="搜索"
        k="H"
        tail={'"主题和样式也有助于...'}
      />
      <Item text="同义词" k="Y" arrow />
      <Item
        icon={<Svg><path d="M6 13.500H0.500V0.500H6L8.500 3V5M6 0.500V3.500H8.500" stroke={GRAY} /><path d="M2 3.500H5M2 5.500H5" stroke="#e07b39" /><T x={2} y={12} s={8} b>a</T><path d="M10.500 2.500H14.500V6M12.500 4.500L14.500 6.500L16 4.500" stroke={BLUE} /><path d="M8.500 8.500H15.500V12.500H8.500ZM12 6.500V15.500" stroke="#444" /></Svg>}
        text="翻译"
        k="S"
      />
      <Rule />
      <Item icon={<LinkIcon />} text="链接" k="I" />
      <Item icon={<NewCommentIcon />} text="新建批注" k="M" />
    </div>
  );
}

function Annotations() {
  return (
    <svg viewBox="345 160 711 824" className="pointer-events-none absolute left-0 top-0 h-[824px] w-[711px] overflow-visible" aria-hidden="true">
      <g fill="#ff0000" stroke="#ff0000" strokeLinecap="round" className="[filter:drop-shadow(2px_4px_2px_rgba(0,0,0,0.6))]">
        <path d="M372 231L674 135.500" strokeWidth="3" />
        <path d="M695 128.500L667 130L672 136L671 142Z" stroke="none" />
        <path d="M640 776L803 686" strokeWidth="3" />
        <path d="M823 674.500L796 681L801.500 686.500L803 694Z" stroke="none" />
      </g>
      <path d="M984 673V688L987.500 685L990.500 690.500L993 689.500L990.500 684.200H994.500Z" fill="#fff" stroke="#222" />
    </svg>
  );
}

/* ---------- status bar ---------- */

function StatusBar() {
  return (
    <footer className="h-[18px] shrink-0 overflow-hidden border-t border-[#c6c6c6] bg-[#f3f3f3] text-xs text-[#333]">
      <div className="flex h-5 items-center whitespace-nowrap pl-2">
        <span className="w-[109px]">第 2 页{C}共 8 页</span>
        <span className="w-[100px]">230/2318 个字</span>
        <button type="button" aria-label="校对" className="mr-[19px]">
          <Svg><path d="M8 14.500H6.500L5 13.500H1.500V2.500H5.500L7.500 3.500V14M7.500 3.500L9.500 2.500H13.500V13.500H9" stroke={GRAY} /><path d="M9.500 5.500L13 10.500M13 5.500L9.500 10.500" stroke="#444" strokeWidth="1.200" /></Svg>
        </button>
        <span className="w-[74px]">修订: 关闭</span>
        <span className="w-10">插入</span>
        <button type="button" aria-label="宏录制" className="mr-4">
          <Svg><circle cx="3.500" cy="3.500" r="3" fill="#555" /><path d="M8 2.500H14.500V14.500H2.500V8" stroke={GRAY} /><path d="M3 6.500H14M5 8.500H13M5 10.500H13M5 12.500H13" stroke={GRAY} strokeDasharray="2 1" /></Svg>
        </button>
        <button type="button" className="flex items-center">
          <Svg w={18}><path d="M6 2C1.500 3.500 0.500 9.500 4.500 12.500M9.500 2.200C11.500 3 12.500 4.500 12.800 6M8 1V8M5.500 6L8 8.500L10.500 6" stroke="#555" strokeWidth="1.200" /><T x={9} y={15} s={13} b>?</T></Svg>
          辅助功能: 不可用
        </button>
        <div className="ml-auto flex items-center">
          <button type="button" aria-label="阅读视图" className="mr-3">
            <Svg><path d="M7.500 3.500L5.500 2.500H1.500V12.500H5.500L7.500 13.500L9.500 12.500H13.500V2.500H9.500ZM7.500 3.500V13M3 5.500H6M3 7.500H6M3 9.500H6M9 5.500H12M9 7.500H12M9 9.500H12" stroke={GRAY} /></Svg>
          </button>
          <button type="button" aria-label="页面视图" className="grid h-5 w-10 place-items-center bg-[#c6c6c6]">
            <Svg><path d="M1.500 1.500H14.500V14.500H1.500ZM3 4.500H13M3 6.500H13M3 8.500H13M3 10.500H13M3 12.500H13" stroke={GRAY} /></Svg>
          </button>
          <button type="button" aria-label="Web 版式视图" className="ml-3">
            <Svg><path d="M7 12.500H1.500V1.500H12.500V5M3 4.500H11M3 6.500H8M3 8.500H7" stroke={GRAY} /><circle cx="10.500" cy="10.500" r="3.800" fill="#777" /><path d="M8.500 9L11 10L10 13" stroke="#eee" /></Svg>
          </button>
          <button type="button" aria-label="缩小" className="ml-[18px] mr-1"><Svg w={8} h={9}><path d="M0 4.500H8" stroke="#333" /></Svg></button>
          <input
            type="range"
            aria-label="显示比例"
            min="10"
            max="190"
            defaultValue="92"
            className="h-px w-[100px] appearance-none bg-[#444] [&::-webkit-slider-thumb]:h-3 [&::-webkit-slider-thumb]:w-[5px] [&::-webkit-slider-thumb]:appearance-none [&::-webkit-slider-thumb]:bg-[#444]"
          />
          <button type="button" aria-label="放大" className="ml-[5px] mr-3.5"><Svg w={8} h={9}><path d="M0 4.500H8M4 0.500V8.500" stroke="#333" /></Svg></button>
          <span className="w-[45px]">90%</span>
        </div>
      </div>
    </footer>
  );
}

function Watermark() {
  return (
    <div className="pointer-events-none absolute bottom-2 right-2.5 flex items-center opacity-90">
      <Svg w={44} h={42}>
        <defs>
          <linearGradient id="swirlTop" x1="0" y1="1" x2="1" y2="0">
            <stop offset="0" stopColor="#3f6fc0" />
            <stop offset="1" stopColor="#62c0ea" />
          </linearGradient>
          <linearGradient id="swirlLow" x1="0" y1="1" x2="1" y2="0">
            <stop offset="0" stopColor="#d8e04a" />
            <stop offset="1" stopColor="#3fb58e" />
          </linearGradient>
        </defs>
        <path d="M43 1C22 -1 2 11 1 25C0.500 33 8 36 16 34C8 32 6 27 9 21C14 11 28 4 43 1Z" fill="url(#swirlTop)" />
        <path d="M4 40C18 40 29 33 31 24C32 17 24 15 18 19C13 22 14 28 20 27C17 24 21 20 25 22C28 24 24 32 12 35Z" fill="#4c84cc" />
        <path d="M4 41C26 44 43 34 42 22C41.500 16 35 13 28 15C35 18 36 24 30 30C24 36 14 39 4 41Z" fill="url(#swirlLow)" />
      </Svg>
      <div className="flex flex-col font-bold">
        <span className="text-[21px] leading-[26px] text-[#5a96d2]">极光下载站</span>
        <span className="pl-0.5 font-[Liberation_Sans] text-base leading-4 text-[#66c183]">www.xz7.com</span>
      </div>
    </div>
  );
}

export default function App() {
  return (
    <div className="relative flex h-screen flex-col overflow-hidden bg-[#e6e6e6] font-[Open_Sans,Noto_Sans_CJK_SC,sans-serif]">
      <Header />
      <Ribbon />
      <QuickAccess />
      <main className="flex min-h-0 flex-1">
        <LeftColumn />
        <div className="flex min-w-0 flex-1 justify-center">
          <div className="relative flex w-[711px] shrink-0 flex-col">
            <HorizontalRuler />
            <Page />
            <MiniToolbar />
            <ContextMenu />
            <Annotations />
          </div>
        </div>
        <ScrollBar />
      </main>
      <StatusBar />
      <Watermark />
    </div>
  );
}
